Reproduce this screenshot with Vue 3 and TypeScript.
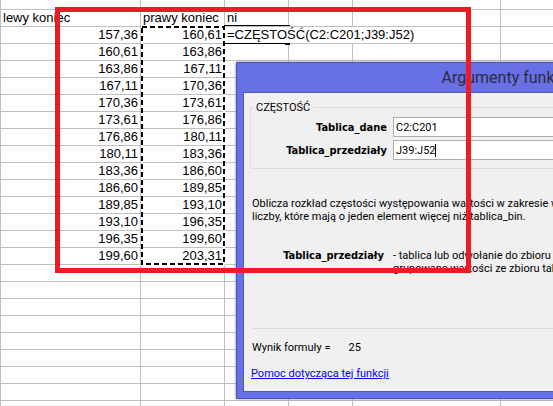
<script setup lang="ts">
import { ref } from 'vue'

const bounds: string[] = [
  '157,36', '160,61', '163,86', '167,11', '170,36', '173,61', '176,86', '180,11',
  '183,36', '186,60', '189,85', '193,10', '196,35', '199,60', '203,31',
]
const rows = bounds.slice(0, -1).map((low, i) => ({ low, high: bounds[i + 1] }))
const emptyRows = 9
const dataRange = ref('C2:C201')
const binRange = ref('J39:J52')
</script>

<template>
  <main class="screen">
    <table class="sheet">
      <colgroup>
        <col class="wide" /><col class="mid" /><col class="narrow" /><col class="narrow" />
        <col class="long" /><col />
      </colgroup>
      <tbody>
        <tr class="clipped"><td v-for="c in 6" :key="c"></td></tr>
        <tr>
          <th>lewy koniec</th><th>prawy koniec</th><th>ni</th><td></td><td></td><td></td>
        </tr>
        <tr v-for="(row, i) in rows" :key="row.low">
          <td class="num">{{ row.low }}</td>
          <td class="num">{{ row.high }}</td>
          <template v-if="i === 0">
            <td colspan="3">=CZĘSTOŚĆ(C2:C201;J39:J52)</td>
            <td></td>
          </template>
          <template v-else><td v-for="c in 4" :key="c"></td></template>
        </tr>
        <tr v-for="r in emptyRows" :key="r"><td v-for="c in 6" :key="c"></td></tr>
      </tbody>
    </table>

    <div class="active-cell"></div>
    <svg class="range" viewBox="0 0 84 239" aria-hidden="true">
      <rect x="1" y="1" width="82" height="237" fill="none" stroke="#fff" stroke-width="2" />
      <rect x="1" y="1" width="82" height="237" fill="none" stroke="#000" stroke-width="2" stroke-dasharray="5 3" />
    </svg>

    <section class="dialog" role="dialog" aria-labelledby="dialog-title">
      <h1 id="dialog-title">Argumenty funkcji</h1>
      <div class="body">
        <fieldset>
          <legend>CZĘSTOŚĆ</legend>
          <div class="fields">
            <label for="data">Tablica_dane</label>
            <input id="data" v-model="dataRange" type="text" />
            <label for="bins">Tablica_przedziały</label>
            <div class="editing">
              <input id="bins" v-model="binRange" type="text" />
              <span class="caret"></span>
            </div>
          </div>
        </fieldset>
        <p class="about">
          Oblicza rozkład częstości występowania wartości w zakresie wartości i zwraca w postaci<br />
          liczby, które mają o jeden element więcej niż tablica_bin.
        </p>
        <div class="argument">
          <b>Tablica_przedziały</b>
          <p>- tablica lub odwołanie do zbioru przedziałów<br />grupowane wartości ze zbioru tablica_dane.</p>
        </div>
        <hr />
        <p class="result"><span>Wynik formuły =</span><output>25</output></p>
        <a href="#pomoc">Pomoc dotycząca tej funkcji</a>
      </div>
    </section>

    <div class="marker"></div>
  </main>
</template>

<style>
body {
  margin: 0;
  overflow: hidden;
}
</style>

<style scoped>
.screen {
  position: relative;
  height: 100vh;
  overflow: hidden;
  background: #fff;
  color: #000;
  font-family: "Liberation Sans", Arial, sans-serif;
}
.sheet {
  width: 100%;
  table-layout: fixed;
  border-collapse: separate;
  border-spacing: 0;
  font-size: 13px;
  line-height: 16px;
}
.wide { width: 140px; }
.mid { width: 84px; }
.narrow { width: 64px; }
.long { width: 148px; }
th,
td {
  box-sizing: border-box;
  height: 17px;
  padding: 0 2px;
  border: solid #c0c0c0;
  border-width: 0 0 1px 1px;
  font-weight: normal;
  text-align: left;
  white-space: nowrap;
}
.clipped td { height: 10px; }
.num { text-align: right; }
.active-cell {
  position: absolute;
  left: 224px;
  top: 25px;
  width: 66px;
  height: 17px;
  border: solid #000;
  border-width: 1px 0;
}
.active-cell::after {
  content: "";
  position: absolute;
  right: 0;
  bottom: -2px;
  width: 5px;
  height: 2px;
  background: #000;
}
.range {
  position: absolute;
  left: 141px;
  top: 26px;
  width: 84px;
  height: 239px;
}
.dialog {
  position: absolute;
  left: 236px;
  top: 62px;
  box-sizing: border-box;
  width: 540px;
  padding: 0 6px 6px;
  border: 1px solid #4b53b4;
  background: #6870e6;
  box-shadow: 0 0 3px #8888a0;
  font-family: Roboto, "Noto Sans", sans-serif;
  font-size: 11px;
  line-height: 13px;
  white-space: nowrap;
}
h1 {
  margin: 0;
  color: #2b2b40;
  font: 16px/29px Roboto, sans-serif;
  text-align: center;
}
.body {
  padding: 8px 6px 11px;
  border: 1px solid #5058b8;
  background: #f0f0f0;
}
fieldset {
  margin: 0;
  padding: 3px 8px 8px;
  border: 1px solid #dcdcdc;
}
legend {
  margin-left: -6px;
  padding: 0 3px;
}
.fields {
  display: grid;
  grid-template-columns: 128px 1fr;
  gap: 3px 6px;
  align-items: center;
}
label,
b {
  font-family: "DejaVu Sans Condensed", "Noto Sans", sans-serif;
  font-weight: bold;
  text-align: right;
}
input {
  display: block;
  box-sizing: border-box;
  width: 100%;
  height: 20px;
  padding: 0 2px;
  border: 1px solid #abadb3;
  background: #fff;
  color: #000;
  font: inherit;
}
.editing { position: relative; }
.caret {
  position: absolute;
  left: 42px;
  top: 4px;
  width: 1px;
  height: 13px;
  background: #000;
}
p { margin: 0; }
.about { margin: 28px 2px 26px; }
.argument {
  display: grid;
  grid-template-columns: 134px 1fr;
  gap: 9px;
}
hr {
  margin: 53px 2px 12px;
  border: 0;
  border-top: 1px solid #dcdcdc;
}
.result {
  display: flex;
  gap: 18px;
  margin: 0 2px 13px;
}
a {
  display: block;
  width: max-content;
  margin-left: 1px;
  color: #00f;
}
.marker {
  position: absolute;
  left: 55px;
  top: 7px;
  box-sizing: border-box;
  width: 416px;
  height: 266px;
  border: 5px solid #ed1c24;
  pointer-events: none;
}
</style>
